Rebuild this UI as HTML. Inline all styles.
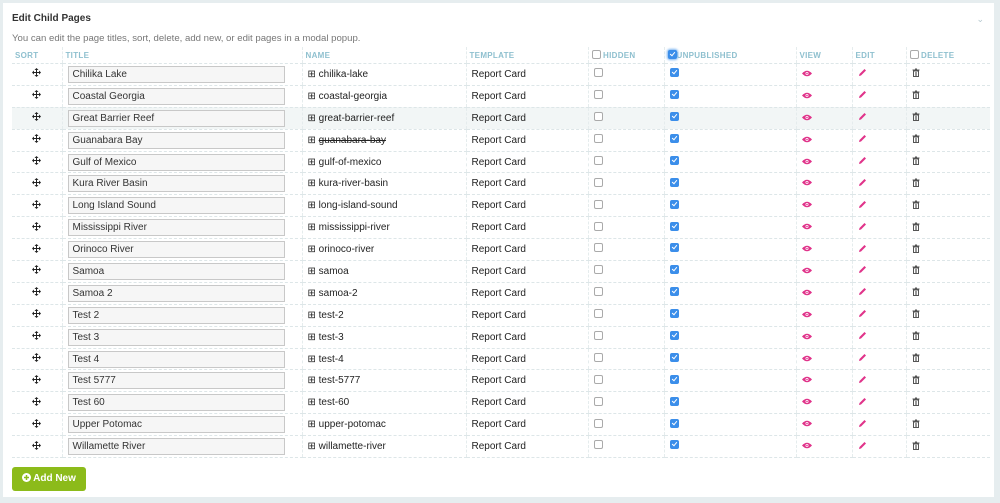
<!DOCTYPE html>
<html><head><meta charset="utf-8"><style>
body{margin:0;width:1000px;height:503px;background:#e6edef;font-family:"Liberation Sans",sans-serif;overflow:hidden;position:relative}
.panel{position:absolute;left:3px;top:3px;width:991px;height:494px;background:#fff}
h1{position:absolute;left:9px;top:10px;margin:0;font-size:10px;font-weight:bold;color:#333}
.desc{position:absolute;left:9px;top:30px;font-size:9.6px;color:#777}
.chev{position:absolute;right:10px;top:11px;color:#b5c8cf;font-size:9px}
table{position:absolute;left:9px;top:44px;border-collapse:collapse;table-layout:fixed;width:978px}
th{height:16px;font-size:8px;color:#8fc0cf;text-align:left;font-weight:bold;padding:0 0 0 3px;border-bottom:1px dashed #dde6e8;border-left:1px dashed #e5eced;letter-spacing:.3px;vertical-align:middle}
td{height:20.9px;font-size:10px;color:#222;padding:0 0 0 5px;border-bottom:1px dashed #dde6e8;border-left:1px dashed #e5eced;vertical-align:middle}
tr>*:first-child{border-left:none}
tr.hl td{background:#f2f6f6}
.inp{width:217px;height:17px;border:1px solid #c8c8c8;background:#f6f6f6;box-sizing:border-box;padding:2px 4px;font-size:10px;line-height:12px;color:#333}
.cb{display:inline-block;width:7px;height:7px;border:1px solid #aaa;border-radius:2px;background:#fff;vertical-align:middle;margin-top:-3px}
.cb.on{background:#3b8eea;border-color:#3b8eea;position:relative}
.cb.on:after{content:"";position:absolute;left:2px;top:0;width:2px;height:4px;border:solid #fff;border-width:0 1px 1px 0;transform:rotate(40deg)}
th .cb{margin-top:-2px}
.c{text-align:center;padding:0}
.add{position:absolute;left:9px;top:464px;width:74px;height:24px;background:#8cbb1a;border-radius:3px;color:#fff;font-size:10px;font-weight:bold;line-height:24px;text-align:center}
.add svg{vertical-align:-1px;margin-right:2px}
</style></head><body>
<div class="panel">
<h1>Edit Child Pages</h1><div class="desc">You can edit the page titles, sort, delete, add new, or edit pages in a modal popup.</div><div class="chev">&#8964;</div>
<table>
<colgroup><col style="width:50px"><col style="width:240px"><col style="width:164px"><col style="width:122px"><col style="width:76px"><col style="width:132px"><col style="width:56px"><col style="width:54px"><col style="width:84px"></colgroup>
<tr><th>SORT</th><th>TITLE</th><th>NAME</th><th>TEMPLATE</th><th><span class="cb"></span> HIDDEN</th><th><span class="cb on" style="box-shadow:0 0 2px 1px #7ab3f0"></span>UNPUBLISHED</th><th>VIEW</th><th>EDIT</th><th><span class="cb"></span> DELETE</th></tr>
<tbody id="b">
</tbody></table>
<div class="add"><svg width="9" height="9" viewBox="0 0 9 9"><circle cx="4.5" cy="4.5" r="4.5" fill="#fff"/><path d="M4.5 2v5M2 4.5h5" stroke="#8cbb1a" stroke-width="1.5"/></svg>Add New</div>
</div>
<script>
var n=["Chilika Lake","Coastal Georgia","Great Barrier Reef","Guanabara Bay","Gulf of Mexico","Kura River Basin","Long Island Sound","Mississippi River","Orinoco River","Samoa","Samoa 2","Test 2","Test 3","Test 4","Test 5777","Test 60","Upper Potomac","Willamette River"];
var s=["chilika-lake","coastal-georgia","great-barrier-reef","guanabara-bay","gulf-of-mexico","kura-river-basin","long-island-sound","mississippi-river","orinoco-river","samoa","samoa-2","test-2","test-3","test-4","test-5777","test-60","upper-potomac","willamette-river"];
var eye='<svg width="10" height="7" viewBox="0 0 10 7"><path d="M0 3.5Q5 -2 10 3.5Q5 9 0 3.5Z" fill="#e0338a"/><circle cx="5" cy="3.5" r="1.5" fill="#fff"/><circle cx="5" cy="3.5" r=".8" fill="#e0338a"/></svg>';
var pen='<svg width="9" height="9" viewBox="0 0 9 9"><path d="M1 8L1.5 6L6.5 1L8 2.5L3 7.5Z" fill="#e0338a"/></svg>';
var trash='<svg width="8" height="9" viewBox="0 0 8 9"><rect x="0.5" y="1.5" width="7" height="1" fill="#555"/><rect x="3" y="0.5" width="2" height="1" fill="#555"/><path d="M1.5 3h5v5.5h-5z" fill="none" stroke="#555" stroke-width="1"/><path d="M3.5 4v4M4.5 4v4" stroke="#555" stroke-width=".6"/></svg>';
var mv='<svg width="9" height="9" viewBox="0 0 9 9"><path d="M4.5 0L6.5 2H5V4H7V2.5L9 4.5L7 6.5V5H5V7H6.5L4.5 9L2.5 7H4V5H2V6.5L0 4.5L2 2.5V4H4V2H2.5Z" fill="#222"/></svg>';
var h="";
for(var i=0;i<18;i++){h+='<tr'+(i==2?' class="hl"':'')+'><td class="c">'+mv+'</td><td><div class="inp">'+n[i]+'</div></td><td>&#8862; '+(i==3?'<s>'+s[i]+'</s>':s[i])+'</td><td>Report Card</td><td><span class="cb"></span></td><td><span class="cb on"></span></td><td>'+eye+'</td><td>'+pen+'</td><td>'+trash+'</td></tr>';}
document.getElementById("b").innerHTML=h;
</script>
</body></html>
